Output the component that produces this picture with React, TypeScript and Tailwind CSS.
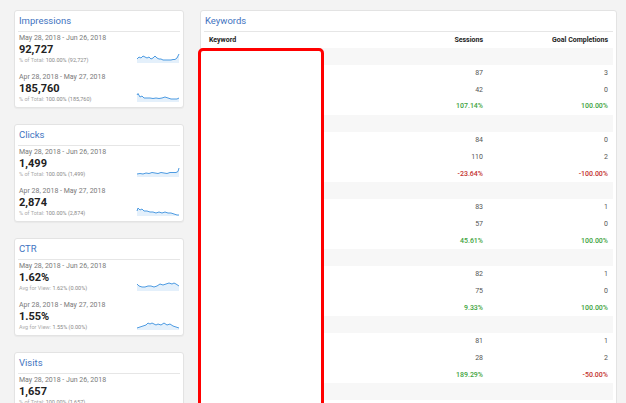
import React from "react";

type Section = { date: string; value: string; label: string; labelVal: string; spark?: string };
type Card = { title: string; sections: Section[] };

const cards: Card[] = [
  {
    title: "Impressions",
    sections: [
      { date: "May 28, 2018 - Jun 26, 2018", value: "92,727", label: "% of Total:", labelVal: "100.00% (92,727)", spark: "M0,6 L2,4 L4,5 L6,3 L8,4 L10,5 L12,4 L14,6 L16,5 L18,3 L20,5 L22,6 L24,6 L26,7 L28,7 L30,7 L32,7 L34,7 L36,6.5 L38,6.5 L40,5 L42,1" },
      { date: "Apr 28, 2018 - May 27, 2018", value: "185,760", label: "% of Total:", labelVal: "100.00% (185,760)", spark: "M0,3 L1,1.5 L3,5 L5,4 L7,6 L10,6 L13,6 L16,6.5 L19,6 L22,6.5 L25,6 L28,5 L31,6 L34,7 L37,7 L40,7 L42,6" },
    ],
  },
  {
    title: "Clicks",
    sections: [
      { date: "May 28, 2018 - Jun 26, 2018", value: "1,499", label: "% of Total:", labelVal: "100.00% (1,499)", spark: "M0,7 L3,6.5 L6,7 L9,6 L12,6.5 L15,5.5 L18,6 L21,6.5 L24,5.5 L27,6 L30,6.5 L33,5.5 L36,5.5 L39,5.5 L41,4.5 L42,1" },
      { date: "Apr 28, 2018 - May 27, 2018", value: "2,874", label: "% of Total:", labelVal: "100.00% (2,874)", spark: "M0,5 L1,2 L3,4 L5,3 L7,5 L10,5 L13,6 L16,6 L19,7 L22,6 L25,7 L28,6 L31,7 L34,7 L37,8 L40,9 L42,9" },
    ],
  },
  {
    title: "CTR",
    sections: [
      { date: "May 28, 2018 - Jun 26, 2018", value: "1.62%", label: "Avg for View:", labelVal: "1.62% (0.00%)", spark: "M0,3 L2,5 L5,6 L8,6 L11,5 L14,5 L17,6 L20,5 L23,3 L26,4 L29,3 L32,2 L35,3 L37,2 L39,3 L42,5" },
      { date: "Apr 28, 2018 - May 27, 2018", value: "1.55%", label: "Avg for View:", labelVal: "1.55% (0.00%)", spark: "M0,8 L3,7 L6,6 L9,5 L11,3 L13,4 L15,3 L17,4 L19,5 L21,4 L24,5 L27,3 L30,5 L33,4 L36,6 L39,7 L42,8" },
    ],
  },
  {
    title: "Visits",
    sections: [
      { date: "May 28, 2018 - Jun 26, 2018", value: "1,657", label: "% of Total:", labelVal: "100.00% (1,657)" },
    ],
  },
];

type Group = { s1: string; s2: string; sp: string; g1: string; g2: string; gp: string; spPos: boolean; gpPos: boolean };
const groups: Group[] = [
  { s1: "87", s2: "42", sp: "107.14%", g1: "3", g2: "0", gp: "100.00%", spPos: true, gpPos: true },
  { s1: "84", s2: "110", sp: "-23.64%", g1: "0", g2: "2", gp: "-100.00%", spPos: false, gpPos: false },
  { s1: "83", s2: "57", sp: "45.61%", g1: "1", g2: "0", gp: "100.00%", spPos: true, gpPos: true },
  { s1: "82", s2: "75", sp: "9.33%", g1: "1", g2: "0", gp: "100.00%", spPos: true, gpPos: true },
  { s1: "81", s2: "28", sp: "189.29%", g1: "1", g2: "2", gp: "-50.00%", spPos: true, gpPos: false },
  { s1: "", s2: "", sp: "", g1: "", g2: "", gp: "", spPos: true, gpPos: true },
];

function Spark({ d }: { d: string }) {
  return (
    <svg width="42" height="10" viewBox="0 0 42 10" className="block overflow-visible">
      <path d={`${d} L42,10 L0,10 Z`} fill="#e4f0fb" stroke="none" />
      <path d={d} fill="none" stroke="#4d9be2" strokeWidth="1" strokeLinejoin="round" />
    </svg>
  );
}

function MetricCard({ card }: { card: Card }) {
  return (
    <div className="bg-white border border-[#e3e3e3] rounded-[3px] shadow-[0_1px_1px_rgba(0,0,0,0.04)] px-[3px] pb-[4px]">
      <div className="h-[21px] flex items-center pl-[1px] border-b border-[#e6e6e6] text-[9.5px] text-[#3f74c1]">
        {card.title}
      </div>
      {card.sections.map((s, i) => (
        <div key={i} className={i === 0 ? "pt-[1px] pl-[1px]" : "pt-[8px] pl-[1px]"}>
          <div className="h-[10px] leading-[10px] text-[7px] text-[#7a7a7a]">{s.date}</div>
          <div className="flex items-end justify-between pr-[1px]">
            <div>
              <div className="h-[13px] leading-[13px] text-[11px] font-bold text-[#222]">{s.value}</div>
              <div className="mt-[1px] h-[7px] leading-[7px] text-[5.5px] text-[#aaa]">
                {s.label} <span className="text-[#888]">{s.labelVal}</span>
              </div>
            </div>
            {s.spark && (
              <div className="mb-[1px]">
                <Spark d={s.spark} />
              </div>
            )}
          </div>
        </div>
      ))}
    </div>
  );
}

function DataRow({ a, b, cls }: { a: string; b: string; cls?: [string, string] }) {
  return (
    <div className="h-[16.7px] flex items-center px-[5px] text-[7px]">
      <div className="flex-1" />
      <div className={`w-[100px] text-right ${cls ? cls[0] : "text-[#555]"}`}>{a}</div>
      <div className={`w-[125px] text-right ${cls ? cls[1] : "text-[#555]"}`}>{b}</div>
    </div>
  );
}

export default function App() {
  return (
    <div
      className="w-[626px] h-[403px] overflow-hidden bg-[#f3f3f3] flex items-start"
      style={{ fontFamily: "Roboto, 'Liberation Sans', sans-serif" }}
    >
      <div className="w-[170px] ml-[14px] mt-[10px] flex flex-col gap-[16px]">
        {cards.map((c) => (
          <MetricCard key={c.title} card={c} />
        ))}
      </div>
      <div className="relative ml-[16px] mt-[10px] w-[417px] h-[420px] bg-white border border-[#e3e3e3] rounded-[3px] px-[3px]">
        <div className="h-[21px] flex items-center pl-[1px] border-b border-[#e6e6e6] text-[9.5px] text-[#3f74c1]">
          Keywords
        </div>
        <div className="h-[16px] flex items-center px-[5px] text-[7px] font-bold text-[#222]">
          <div className="flex-1">Keyword</div>
          <div className="w-[100px] text-right">Sessions</div>
          <div className="w-[125px] text-right">Goal Completions</div>
        </div>
        {groups.map((g, i) => (
          <div key={i}>
            <div className="h-[17px] bg-[#f7f7f7]" />
            <DataRow a={g.s1} b={g.g1} />
            <DataRow a={g.s2} b={g.g2} />
            <DataRow
              a={g.sp}
              b={g.gp}
              cls={[
                g.spPos ? "text-[#3ea33e] font-medium" : "text-[#c4312f] font-medium",
                g.gpPos ? "text-[#3ea33e] font-medium" : "text-[#c4312f] font-medium",
              ]}
            />
          </div>
        ))}
        <div className="absolute left-[-3px] top-[37px] w-[126px] h-[380px] bg-white border-[3px] border-[#ff0000] rounded-[5px]" />
      </div>
    </div>
  );
}
